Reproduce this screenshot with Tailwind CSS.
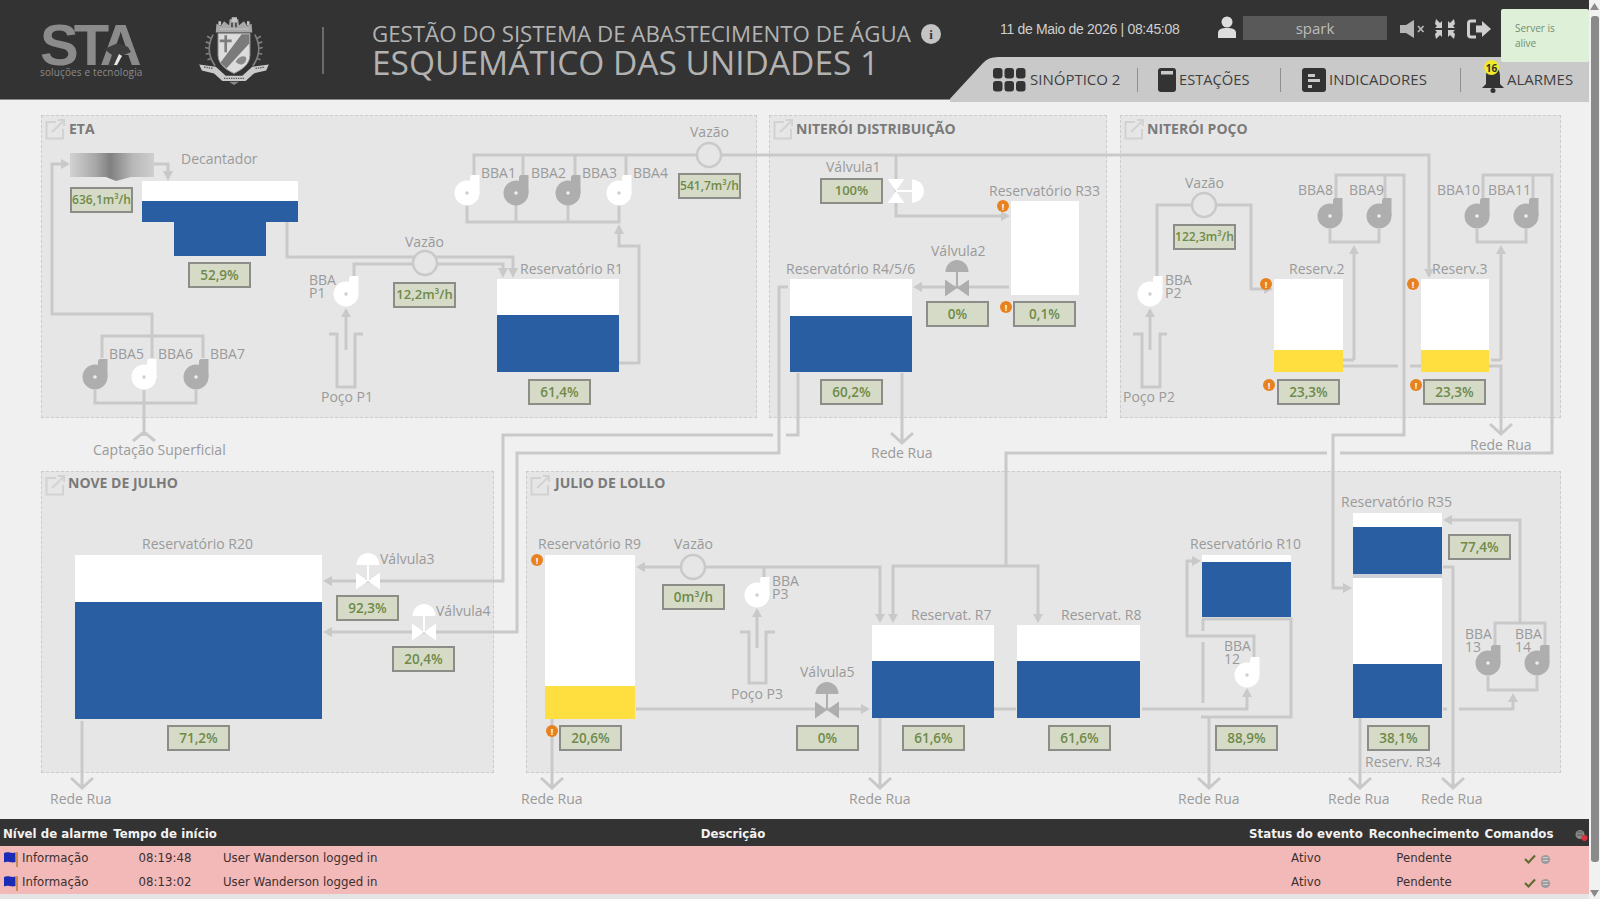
<!DOCTYPE html>
<html lang="pt-BR">
<head>
<meta charset="utf-8">
<title>Esquemático das Unidades 1</title>
<script src="https://cdn.jsdelivr.net/npm/@tailwindcss/browser@4"></script>
</head>
<body class="overflow-hidden bg-[#f0f0f0]">
<div class="flex h-[899px] w-[1600px] [font-family:'Open_Sans',sans-serif]">
  <div class="flex h-[899px] w-[1589px] flex-col">
    <!-- HEADER -->
    <header class="relative z-10 flex h-[100px] shrink-0 border-b border-[#8a8a8a] bg-[#333333]">
      <div class="ml-[40px] mt-[23px] w-[103px]">
        <div class="relative h-[44px] whitespace-nowrap text-[58px] font-bold leading-[44px] tracking-[-5px] text-[#8b8b8b] [font-family:'Liberation_Sans',sans-serif]">STA
          <svg class="absolute left-[64px] top-[19px]" width="28" height="24" viewBox="0 0 28 24"><path d="M0 7 L14 1 L24 5 L27 10 L18 14 L14 24 L4 24 L8 13Z" fill="#3d3d3d"/><path d="M10 23 L15 12 L18 14 L13 23Z" fill="#e8e8e8"/></svg>
        </div>
        <div class="whitespace-nowrap text-[10px] leading-[11px] tracking-[.14px] text-[#8b8b8b]">soluções e tecnologia</div>
      </div>
      <svg class="ml-[56px] mt-[17px]" width="70" height="68" viewBox="510 35 210 205">
        <path d="M560 82 L562 55 L575 62 L585 48 L600 60 L602 42 L628 42 L630 60 L645 48 L655 62 L668 55 L670 82Z" fill="#a8a8a8"/>
        <path d="M568 60h8v-12h-8zM608 50h16v-14h-16zM654 60h8v-12h-8zM572 70h88v3h-88z" fill="#c2c2c2"/>
        <path d="M606 52h6v14h-6zM618 52h6v14h-6z" fill="#555555"/>
        <path d="M567 85 H663 V150 C663 180 635 195 615 205 C595 195 567 180 567 150Z" fill="#dcdcdc" stroke="#9a9a9a" stroke-width="3"/>
        <path d="M638 87 H661 V115 L592 190 L574 173Z" fill="#7a7a7a"/>
        <path d="M586 90h8v13h14v8h-14v30h-8v-30h-14v-8h14z" fill="#7c7c7c"/>
        <path d="M620 170 C630 150 652 150 652 160 C652 175 635 187 620 170Z" fill="#8a8a8a"/>
        <path d="M552 88 C535 120 535 150 558 182 M546 100 l-12 -7 M543 115 l-13 -5 M541 130 l-13 -3 M542 145 l-12 1 M546 160 l-11 4 M678 88 C695 120 695 150 672 182 M684 100 l12 -7 M687 115 l13 -5 M689 130 l13 -3 M688 145 l12 1 M684 160 l11 4" stroke="#808080" stroke-width="5" fill="none"/>
        <path d="M510 178 L560 185 L590 212 L640 212 L670 185 L720 178 L712 196 L675 205 L650 228 L580 228 L555 205 L518 196Z" fill="#c9c9c9"/>
        <path d="M525 186l28 4M680 190l28-4M585 220h60" stroke="#555555" stroke-width="4" stroke-dasharray="4 3" fill="none"/>
        <path d="M600 230 L630 230 L615 240Z" fill="#888888"/>
      </svg>
      <div class="ml-[53px] mt-[27px] h-[47px] w-[2px] bg-[#6b6b6b]"></div>
      <div class="ml-[48px] w-[549px] pt-[21px] text-[#b2b2b2]">
        <div class="flex items-center">
          <span class="whitespace-nowrap text-[22.300px] leading-[26px]">GESTÃO DO SISTEMA DE ABASTECIMENTO DE ÁGUA</span>
        </div>
        <div class="mt-[-4px] whitespace-nowrap text-[33.500px] leading-[38px]">ESQUEMÁTICO DAS UNIDADES 1</div>
      </div>
      <div class="mt-[24px] flex h-[20px] w-[20px] shrink-0 items-center justify-center rounded-full bg-[#c4c4c4] text-[13px] font-bold leading-none text-[#333333] [font-family:'Liberation_Serif',serif]">i</div>
      <div class="absolute left-[950px] top-0 w-[639px]">
        <div class="flex h-[57px] items-center pl-[50px]">
          <div class="mt-[2px] w-[218px] whitespace-nowrap text-[14px] text-[#cfcfcf] [font-family:'Liberation_Sans',sans-serif] tracking-[-.32px]">11 de Maio de 2026 | 08:45:08</div>
          <svg class="mb-[3px] -ml-[1px]" width="20" height="22" viewBox="0 0 20 22"><circle cx="10" cy="6" r="5.500" fill="#dddddd"/><path d="M1 22 V17 C1 13 5 12 10 12 C15 12 19 13 19 17 V22Z" fill="#dddddd"/></svg>
          <div class="ml-[6px] mb-[1px] flex h-[24px] w-[144px] items-center justify-center bg-[#595959] text-[15px] text-[#bdbdbd]">spark</div>
          <svg class="ml-[13px]" width="25" height="18" viewBox="0 0 25 18"><path d="M0 5h6l8-5v18l-8-5H0z" fill="#b5b5b5"/><path d="M18 6l5.500 6M23.500 6l-5.500 6" stroke="#b5b5b5" stroke-width="1.800"/></svg>
          <svg class="ml-[10px]" width="20" height="20" viewBox="0 0 20 20"><path d="M1 0l4 4 2-2v7H0l2-2-2-2z M19 0l-4 4-2-2v7h7l-2-2 2-2z M1 20l4-4 2 2v-7H0l2 2-2 2z M19 20l-4-4-2 2v-7h7l-2 2 2 2z" fill="#cdcdcd"/></svg>
          <svg class="ml-[12px]" width="25" height="20" viewBox="0 0 25 20"><path d="M9 2H4C2.500 2 1.500 3 1.500 4.500v11C1.500 17 2.500 18 4 18h5" fill="none" stroke="#cfcfcf" stroke-width="3"/><path d="M9 6.500h6V2l9 8-9 8v-4.500H9z" fill="#cfcfcf"/></svg>
        </div>
        <div class="relative h-[45px]">
          <svg class="absolute left-0 top-0" width="639" height="45" viewBox="0 0 639 45"><path d="M-3 45 L33 6 Q38 0 48 0 H639 V45Z" fill="#c9c9c9"/></svg>
          <nav class="relative flex h-[45px] items-center text-[15px] text-[#3f3f3f]">
            <div class="flex w-[187px] items-center pl-[43px]">
              <svg width="33" height="24" viewBox="0 0 33 24"><g fill="#333333"><rect width="9.500" height="10.500" rx="3"/><rect x="11.500" width="9.500" height="10.500" rx="3"/><rect x="23" width="9.500" height="10.500" rx="3"/><rect y="13" width="9.500" height="10.500" rx="3"/><rect x="11.500" y="13" width="9.500" height="10.500" rx="3"/><rect x="23" y="13" width="9.500" height="10.500" rx="3"/></g></svg>
              <span class="ml-[4px] whitespace-nowrap">SINÓPTICO 2</span>
            </div>
            <div class="h-[24px] w-[1px] bg-[#8f8f8f]"></div>
            <div class="flex w-[142px] items-center pl-[20px]">
              <svg width="18" height="24" viewBox="0 0 18 24"><rect width="18" height="24" rx="3" fill="#333333"/><rect x="3" y="3" width="12" height="3.500" fill="#c9c9c9"/></svg>
              <span class="ml-[3px] text-[14.700px]">ESTAÇÕES</span>
            </div>
            <div class="h-[24px] w-[1px] bg-[#8f8f8f]"></div>
            <div class="flex w-[179px] items-center pl-[21px]">
              <svg width="24" height="24" viewBox="0 0 24 24"><rect width="24" height="24" rx="3" fill="#333333"/><path d="M6 6h7v3H6zM6 11h12v3H6zM6 17h4v3H6z" fill="#c9c9c9"/></svg>
              <span class="ml-[3px]">INDICADORES</span>
            </div>
            <div class="h-[24px] w-[1px] bg-[#8f8f8f]"></div>
            <div class="relative flex items-center pl-[21px]">
              <svg width="22" height="27" viewBox="0 0 22 27"><path d="M11 1C6 1 4 5 4 10V18L0 22H22L18 18V10C18 5 16 1 11 1Z" fill="#333333"/><circle cx="11" cy="24.500" r="2.500" fill="#333333"/></svg>
              <span class="ml-[3px]">ALARMES</span>
              <div class="absolute left-[23px] top-[-6px] flex h-[15px] w-[15px] items-center justify-center rounded-full bg-[#f2ea2a] text-[10px] font-bold leading-none text-[#333333]">16</div>
            </div>
          </nav>
        </div>
      </div>
      <div class="absolute left-[1501px] top-[9px] h-[53px] w-[88px] rounded-[2px] bg-[#dff0d8] px-[14px] pt-[12px] text-[10px] leading-[15px] text-[#6f8f72]">Server is alive</div>
    </header>

    <!-- DIAGRAM -->
    <main class="relative h-[719px] shrink-0 overflow-hidden bg-[#f0f0f0]">
      <div class="absolute left-0 top-[-100px] h-[899px] w-[1589px]">
        <!-- panels -->
        <section class="absolute left-[41px] top-[115px] flex h-[303px] w-[716px] items-start gap-[4px] border border-dashed border-[#cccccc] bg-[#e6e6e6] pl-[3px] pt-[3px]">
          <svg width="20" height="21" viewBox="0 0 20 21" fill="none" stroke="#d2d2d2" stroke-width="2"><path d="M11 3H1.500V19.500H18V10M7 13L19 1.500M13 1H19V7"/></svg>
          <h2 class="text-[14px] font-bold leading-[19px] text-[#7a7a7a]">ETA</h2>
        </section>
        <section class="absolute left-[769px] top-[115px] flex h-[303px] w-[338px] items-start gap-[3px] border border-dashed border-[#cccccc] bg-[#e6e6e6] pl-[3px] pt-[3px]">
          <svg width="20" height="21" viewBox="0 0 20 21" fill="none" stroke="#d2d2d2" stroke-width="2"><path d="M11 3H1.500V19.500H18V10M7 13L19 1.500M13 1H19V7"/></svg>
          <h2 class="text-[14px] font-bold leading-[19px] text-[#7a7a7a]">NITERÓI DISTRIBUIÇÃO</h2>
        </section>
        <section class="absolute left-[1120px] top-[115px] flex h-[303px] w-[441px] items-start gap-[3px] border border-dashed border-[#cccccc] bg-[#e6e6e6] pl-[3px] pt-[3px]">
          <svg width="20" height="21" viewBox="0 0 20 21" fill="none" stroke="#d2d2d2" stroke-width="2"><path d="M11 3H1.500V19.500H18V10M7 13L19 1.500M13 1H19V7"/></svg>
          <h2 class="text-[14px] font-bold leading-[19px] text-[#7a7a7a]">NITERÓI POÇO</h2>
        </section>
        <section class="absolute left-[41px] top-[471px] flex h-[302px] w-[453px] items-start gap-[3px] border border-dashed border-[#cccccc] bg-[#e6e6e6] pl-[3px] pt-[3px]">
          <svg width="20" height="21" viewBox="0 0 20 21" fill="none" stroke="#d2d2d2" stroke-width="2"><path d="M11 3H1.500V19.500H18V10M7 13L19 1.500M13 1H19V7"/></svg>
          <h2 class="mt-[-2px] text-[14px] font-bold leading-[19px] text-[#7a7a7a]">NOVE DE JULHO</h2>
        </section>
        <section class="absolute left-[526px] top-[471px] flex h-[302px] w-[1035px] items-start gap-[5px] border border-dashed border-[#cccccc] bg-[#e6e6e6] pl-[3px] pt-[3px]">
          <svg width="20" height="21" viewBox="0 0 20 21" fill="none" stroke="#d2d2d2" stroke-width="2"><path d="M11 3H1.500V19.500H18V10M7 13L19 1.500M13 1H19V7"/></svg>
          <h2 class="mt-[-2px] text-[14px] font-bold leading-[19px] text-[#7a7a7a]">JULIO DE LOLLO</h2>
        </section>

        <!-- pipes, pumps, valves -->
        <svg class="absolute left-0 top-0" width="1589" height="899" viewBox="0 0 1589 899">
          <defs>
            <linearGradient id="dec" x1="0" x2="1" y1="0" y2="0">
              <stop offset="0" stop-color="#d2d2d2"/><stop offset=".3" stop-color="#a8a8a8"/><stop offset=".48" stop-color="#808080"/><stop offset=".75" stop-color="#b8b8b8"/><stop offset="1" stop-color="#cfcfcf"/>
            </linearGradient>
            <g id="pw"><circle r="12.500" fill="#ffffff"/><path d="M3 -16.500 L4.500 -18 H12.500 V0 H3Z" fill="#ffffff"/><circle r="1.800" fill="#cfcfcf"/></g>
            <g id="pg"><circle r="12.500" fill="#aeaeae"/><path d="M3 -16.500 L4.500 -18 H12.500 V0 H3Z" fill="#aeaeae"/><circle r="1.800" fill="#eeeeee"/></g>
            <g id="vw" fill="#ffffff"><path d="M-12 -8.500 L0 0 L-12 8.500Z M12 -8.500 L0 0 L12 8.500Z M-11.500 -16 A11.500 12 0 0 1 11.500 -16Z"/><rect x="-1" y="-16" width="2" height="16"/></g>
            <g id="vg" fill="#aeaeae"><path d="M-12 -8.500 L0 0 L-12 8.500Z M12 -8.500 L0 0 L12 8.500Z M-11.500 -16 A11.500 12 0 0 1 11.500 -16Z"/><rect x="-1" y="-16" width="2" height="16"/></g>
          </defs>
          <g fill="none" stroke="#c9c9c9" stroke-width="3">
            <path d="M152 358V314H52V164H62M154 164H168V172M102 358V336H203V358M95 390V403H196V390M144 390V436M133 441L144 432L155 441"/>
            <path d="M287 222V257H513V269M437 264H503V269M413 264H354V276M329 334H337V387H355V334H363M346 350V316M619 363H639V246H619V232"/>
            <path d="M474 175V155H697M523 155V175M575 155V175M626 155V175M721 155H1429V270M467 205V222H619V205M516 205V222M568 205V222"/>
            <path d="M896 155V216H1003M1009 287H921M902 373V441M891 433L902 443L913 433M788 287H779V453H517V632H332M798 373V435H786M773 435H503V581H332"/>
            <path d="M1192 205H1157V277M1216 205H1251V289H1265M1133 334H1142V387H1160V334H1167M1150 350V316"/>
            <path d="M1336 198V175H1404V435H1333V588H1344M1385 175V198M1330 229V242H1379V229M1354 360V254M1343 360H1354M1483 198V175H1552V453H1340M1327 453H1006V566M1038 615V566H893V615M1533 175V198M1477 229V242H1526V229M1501 360V254M1491 360H1501M1343 366H1398M1410 366H1421M1489 366H1501V432M1490 424L1501 434L1512 424"/>
            <path d="M82 721V786M71 778L82 788L93 778M552 719V786M541 778L552 788L563 778"/>
            <path d="M681 567H645M705 567H880V615M764 567V580M740 632H749V683H766V632H775M757 648V617M636 709H862M880 718V786M869 778L880 788L891 778M994 709H1016"/>
            <path d="M1142 709H1247V697M1254 657V636H1187V561H1193M1202 619H1291V717H1201M1203 619V631M1203 642V703M1209 717V786M1198 778L1209 788L1220 778"/>
            <path d="M1495 645V623H1545V645M1520 623V520H1452M1488 676V690H1537V676M1459 709H1513V702M1443 709H1447M1443 567H1453V786M1442 778L1453 788L1464 778M1360 718V786M1349 778L1360 788L1371 778"/>
          </g>
          <g fill="#c9c9c9">
            <polygon points="61,159 61,169 70,164"/><polygon points="163,171 173,171 168,181"/>
            <polygon points="508,268 518,268 513,278"/><polygon points="498,268 508,268 503,278"/>
            <polygon points="341,317 351,317 346,308"/><polygon points="614,234 624,234 619,224"/>
            <polygon points="1424,269 1434,269 1429,278"/><polygon points="1001,211 1001,221 1010,216"/>
            <polygon points="922,282 922,292 913,287"/><polygon points="332,627 332,637 323,632"/>
            <polygon points="332,576 332,586 323,581"/><polygon points="1264,284 1264,294 1273,289"/>
            <polygon points="1145,317 1155,317 1150,308"/><polygon points="1343,583 1343,593 1352,588"/>
            <polygon points="1349,254 1359,254 1354,245"/><polygon points="1496,254 1506,254 1501,245"/>
            <polygon points="1033,614 1043,614 1038,623"/><polygon points="888,614 898,614 893,623"/>
            <polygon points="875,614 885,614 880,623"/><polygon points="645,562 645,572 636,567"/>
            <polygon points="752,617 762,617 757,608"/><polygon points="861,704 861,714 870,709"/>
            <polygon points="1242,697 1252,697 1247,688"/><polygon points="1192,556 1192,566 1201,561"/>
            <polygon points="1452,515 1452,525 1443,520"/><polygon points="1508,702 1518,702 1513,693"/>
          </g>
          <g fill="#e6e6e6" stroke="#c9c9c9" stroke-width="2.500">
            <circle cx="425" cy="263" r="12"/><circle cx="709" cy="155" r="12"/><circle cx="1204" cy="205" r="12"/><circle cx="693" cy="567" r="12"/>
          </g>
          <path d="M70 153H154V177H131L116 181L106 177H70Z" fill="url(#dec)"/>
          <use href="#pg" x="95" y="377"/><use href="#pw" x="144" y="377"/><use href="#pg" x="196" y="377"/>
          <use href="#pw" x="346" y="294"/>
          <use href="#pw" x="467" y="193"/><use href="#pg" x="516" y="193"/><use href="#pg" x="568" y="193"/><use href="#pw" x="619" y="193"/>
          <use href="#pw" x="1150" y="294"/>
          <use href="#pg" x="1330" y="216"/><use href="#pg" x="1379" y="216"/><use href="#pg" x="1477" y="216"/><use href="#pg" x="1526" y="216"/>
          <use href="#pw" x="757" y="595"/><use href="#pw" x="1247" y="675"/>
          <use href="#pg" x="1488" y="663"/><use href="#pg" x="1537" y="663"/>
          <use href="#vw" transform="translate(896 191) rotate(90)"/>
          <use href="#vg" x="957" y="288"/><use href="#vg" x="827" y="710"/>
          <use href="#vw" x="368" y="581"/><use href="#vw" x="424" y="632"/>
        </svg>

        <!-- tanks -->
        <div class="absolute left-[142px] top-[181px] flex h-[41px] w-[156px] flex-col justify-end bg-white"><div class="h-[21px] bg-[#295ea2]"></div></div>
        <div class="absolute left-[174px] top-[222px] h-[34px] w-[92px] bg-[#295ea2]"></div>
        <div class="absolute left-[497px] top-[279px] flex h-[93px] w-[122px] flex-col justify-end bg-white"><div class="h-[57px] bg-[#295ea2]"></div></div>
        <div class="absolute left-[790px] top-[279px] flex h-[93px] w-[122px] flex-col justify-end bg-white"><div class="h-[56px] bg-[#295ea2]"></div></div>
        <div class="absolute left-[1011px] top-[201px] h-[94px] w-[68px] bg-white"></div>
        <div class="absolute left-[1274px] top-[279px] flex h-[93px] w-[69px] flex-col justify-end bg-white"><div class="h-[22px] bg-[#ffdf3f]"></div></div>
        <div class="absolute left-[1421px] top-[279px] flex h-[93px] w-[68px] flex-col justify-end bg-white"><div class="h-[22px] bg-[#ffdf3f]"></div></div>
        <div class="absolute left-[75px] top-[555px] flex h-[164px] w-[247px] flex-col justify-end bg-white"><div class="h-[117px] bg-[#295ea2]"></div></div>
        <div class="absolute left-[545px] top-[555px] flex h-[164px] w-[90px] flex-col justify-end bg-white"><div class="h-[33px] bg-[#ffdf3f]"></div></div>
        <div class="absolute left-[872px] top-[625px] flex h-[93px] w-[122px] flex-col justify-end bg-white"><div class="h-[57px] bg-[#295ea2]"></div></div>
        <div class="absolute left-[1017px] top-[625px] flex h-[93px] w-[123px] flex-col justify-end bg-white"><div class="h-[57px] bg-[#295ea2]"></div></div>
        <div class="absolute left-[1202px] top-[555px] flex h-[62px] w-[89px] flex-col justify-end bg-white"><div class="h-[55px] bg-[#295ea2]"></div></div>
        <div class="absolute left-[1353px] top-[513px] flex h-[61px] w-[89px] flex-col justify-end bg-white"><div class="h-[47px] bg-[#295ea2]"></div></div>
        <div class="absolute left-[1353px] top-[574px] h-[4px] w-[89px] bg-[#ced2d8]"></div>
        <div class="absolute left-[1353px] top-[578px] flex h-[140px] w-[89px] flex-col justify-end bg-white"><div class="h-[54px] bg-[#295ea2]"></div></div>

        <!-- values -->
        <div class="absolute left-[70px] top-[187px] flex h-[26px] w-[63px] items-center justify-center border-2 border-[#8c8c88] bg-[#d6dbc8] text-[12px] font-semibold text-[#6f8a48]">636,1m³/h</div>
        <div class="absolute left-[188px] top-[262px] flex h-[26px] w-[63px] items-center justify-center border-2 border-[#8c8c88] bg-[#d6dbc8] text-[13.500px] font-semibold text-[#6f8a48]">52,9%</div>
        <div class="absolute left-[393px] top-[282px] flex h-[26px] w-[63px] items-center justify-center border-2 border-[#8c8c88] bg-[#d6dbc8] text-[13px] font-semibold text-[#6f8a48]">12,2m³/h</div>
        <div class="absolute left-[528px] top-[379px] flex h-[26px] w-[63px] items-center justify-center border-2 border-[#8c8c88] bg-[#d6dbc8] text-[13.500px] font-semibold text-[#6f8a48]">61,4%</div>
        <div class="absolute left-[678px] top-[173px] flex h-[26px] w-[63px] items-center justify-center border-2 border-[#8c8c88] bg-[#d6dbc8] text-[12px] font-semibold text-[#6f8a48]">541,7m³/h</div>
        <div class="absolute left-[820px] top-[178px] flex h-[26px] w-[63px] items-center justify-center border-2 border-[#8c8c88] bg-[#d6dbc8] text-[13px] font-semibold text-[#6f8a48]">100%</div>
        <div class="absolute left-[926px] top-[301px] flex h-[26px] w-[63px] items-center justify-center border-2 border-[#8c8c88] bg-[#d6dbc8] text-[13.500px] font-semibold text-[#6f8a48]">0%</div>
        <div class="absolute left-[1013px] top-[301px] flex h-[26px] w-[63px] items-center justify-center border-2 border-[#8c8c88] bg-[#d6dbc8] text-[13.500px] font-semibold text-[#6f8a48]">0,1%</div>
        <div class="absolute left-[820px] top-[379px] flex h-[26px] w-[63px] items-center justify-center border-2 border-[#8c8c88] bg-[#d6dbc8] text-[13.500px] font-semibold text-[#6f8a48]">60,2%</div>
        <div class="absolute left-[1173px] top-[224px] flex h-[26px] w-[63px] items-center justify-center border-2 border-[#8c8c88] bg-[#d6dbc8] text-[12px] font-semibold text-[#6f8a48]">122,3m³/h</div>
        <div class="absolute left-[1277px] top-[379px] flex h-[26px] w-[63px] items-center justify-center border-2 border-[#8c8c88] bg-[#d6dbc8] text-[13.500px] font-semibold text-[#6f8a48]">23,3%</div>
        <div class="absolute left-[1423px] top-[379px] flex h-[26px] w-[63px] items-center justify-center border-2 border-[#8c8c88] bg-[#d6dbc8] text-[13.500px] font-semibold text-[#6f8a48]">23,3%</div>
        <div class="absolute left-[336px] top-[595px] flex h-[26px] w-[63px] items-center justify-center border-2 border-[#8c8c88] bg-[#d6dbc8] text-[13.500px] font-semibold text-[#6f8a48]">92,3%</div>
        <div class="absolute left-[392px] top-[646px] flex h-[26px] w-[63px] items-center justify-center border-2 border-[#8c8c88] bg-[#d6dbc8] text-[13.500px] font-semibold text-[#6f8a48]">20,4%</div>
        <div class="absolute left-[167px] top-[725px] flex h-[26px] w-[63px] items-center justify-center border-2 border-[#8c8c88] bg-[#d6dbc8] text-[13.500px] font-semibold text-[#6f8a48]">71,2%</div>
        <div class="absolute left-[559px] top-[725px] flex h-[26px] w-[63px] items-center justify-center border-2 border-[#8c8c88] bg-[#d6dbc8] text-[13.500px] font-semibold text-[#6f8a48]">20,6%</div>
        <div class="absolute left-[662px] top-[584px] flex h-[26px] w-[63px] items-center justify-center border-2 border-[#8c8c88] bg-[#d6dbc8] text-[13.500px] font-semibold text-[#6f8a48]">0m³/h</div>
        <div class="absolute left-[796px] top-[725px] flex h-[26px] w-[63px] items-center justify-center border-2 border-[#8c8c88] bg-[#d6dbc8] text-[13.500px] font-semibold text-[#6f8a48]">0%</div>
        <div class="absolute left-[902px] top-[725px] flex h-[26px] w-[63px] items-center justify-center border-2 border-[#8c8c88] bg-[#d6dbc8] text-[13.500px] font-semibold text-[#6f8a48]">61,6%</div>
        <div class="absolute left-[1048px] top-[725px] flex h-[26px] w-[63px] items-center justify-center border-2 border-[#8c8c88] bg-[#d6dbc8] text-[13.500px] font-semibold text-[#6f8a48]">61,6%</div>
        <div class="absolute left-[1215px] top-[725px] flex h-[26px] w-[63px] items-center justify-center border-2 border-[#8c8c88] bg-[#d6dbc8] text-[13.500px] font-semibold text-[#6f8a48]">88,9%</div>
        <div class="absolute left-[1448px] top-[534px] flex h-[26px] w-[63px] items-center justify-center border-2 border-[#8c8c88] bg-[#d6dbc8] text-[13.500px] font-semibold text-[#6f8a48]">77,4%</div>
        <div class="absolute left-[1367px] top-[725px] flex h-[26px] w-[63px] items-center justify-center border-2 border-[#8c8c88] bg-[#d6dbc8] text-[13.500px] font-semibold text-[#6f8a48]">38,1%</div>

        <!-- alarm dots -->
        <div class="absolute left-[997px] top-[200px] flex h-[12px] w-[12px] items-center justify-center rounded-full bg-[#e8821e] text-[9px] font-bold leading-none text-white">!</div>
        <div class="absolute left-[1000px] top-[301px] flex h-[12px] w-[12px] items-center justify-center rounded-full bg-[#e8821e] text-[9px] font-bold leading-none text-white">!</div>
        <div class="absolute left-[1260px] top-[278px] flex h-[12px] w-[12px] items-center justify-center rounded-full bg-[#e8821e] text-[9px] font-bold leading-none text-white">!</div>
        <div class="absolute left-[1263px] top-[379px] flex h-[12px] w-[12px] items-center justify-center rounded-full bg-[#e8821e] text-[9px] font-bold leading-none text-white">!</div>
        <div class="absolute left-[1407px] top-[278px] flex h-[12px] w-[12px] items-center justify-center rounded-full bg-[#e8821e] text-[9px] font-bold leading-none text-white">!</div>
        <div class="absolute left-[1410px] top-[379px] flex h-[12px] w-[12px] items-center justify-center rounded-full bg-[#e8821e] text-[9px] font-bold leading-none text-white">!</div>
        <div class="absolute left-[531px] top-[554px] flex h-[12px] w-[12px] items-center justify-center rounded-full bg-[#e8821e] text-[9px] font-bold leading-none text-white">!</div>
        <div class="absolute left-[546px] top-[725px] flex h-[12px] w-[12px] items-center justify-center rounded-full bg-[#e8821e] text-[9px] font-bold leading-none text-white">!</div>

        <!-- labels -->
        <div class="text-[14px] leading-[20px] text-[#9a9a9a]">
          <span class="absolute left-[181px] top-[149px] whitespace-nowrap">Decantador</span>
          <span class="absolute left-[109px] top-[344px] whitespace-nowrap">BBA5</span>
          <span class="absolute left-[158px] top-[344px] whitespace-nowrap">BBA6</span>
          <span class="absolute left-[210px] top-[344px] whitespace-nowrap">BBA7</span>
          <span class="absolute left-[93px] top-[440px] whitespace-nowrap">Captação Superficial</span>
          <span class="absolute left-[309px] top-[273px] leading-[13px]">BBA<br>P1</span>
          <span class="absolute left-[405px] top-[232px] whitespace-nowrap">Vazão</span>
          <span class="absolute left-[321px] top-[387px] whitespace-nowrap">Poço P1</span>
          <span class="absolute left-[481px] top-[163px] whitespace-nowrap">BBA1</span>
          <span class="absolute left-[531px] top-[163px] whitespace-nowrap">BBA2</span>
          <span class="absolute left-[582px] top-[163px] whitespace-nowrap">BBA3</span>
          <span class="absolute left-[633px] top-[163px] whitespace-nowrap">BBA4</span>
          <span class="absolute left-[690px] top-[122px] whitespace-nowrap">Vazão</span>
          <span class="absolute left-[520px] top-[259px] whitespace-nowrap">Reservatório R1</span>
          <span class="absolute left-[826px] top-[157px] whitespace-nowrap">Válvula1</span>
          <span class="absolute left-[989px] top-[181px] whitespace-nowrap">Reservatório R33</span>
          <span class="absolute left-[931px] top-[241px] whitespace-nowrap">Válvula2</span>
          <span class="absolute left-[786px] top-[259px] whitespace-nowrap">Reservatório R4/5/6</span>
          <span class="absolute left-[871px] top-[443px] whitespace-nowrap">Rede Rua</span>
          <span class="absolute left-[1185px] top-[173px] whitespace-nowrap">Vazão</span>
          <span class="absolute left-[1165px] top-[273px] leading-[13px]">BBA<br>P2</span>
          <span class="absolute left-[1123px] top-[387px] whitespace-nowrap">Poço P2</span>
          <span class="absolute left-[1298px] top-[180px] whitespace-nowrap">BBA8</span>
          <span class="absolute left-[1349px] top-[180px] whitespace-nowrap">BBA9</span>
          <span class="absolute left-[1437px] top-[180px] whitespace-nowrap">BBA10</span>
          <span class="absolute left-[1488px] top-[180px] whitespace-nowrap">BBA11</span>
          <span class="absolute left-[1289px] top-[259px] whitespace-nowrap">Reserv.2</span>
          <span class="absolute left-[1432px] top-[259px] whitespace-nowrap">Reserv.3</span>
          <span class="absolute left-[1470px] top-[435px] whitespace-nowrap">Rede Rua</span>
          <span class="absolute left-[142px] top-[534px] whitespace-nowrap">Reservatório R20</span>
          <span class="absolute left-[380px] top-[549px] whitespace-nowrap">Válvula3</span>
          <span class="absolute left-[436px] top-[601px] whitespace-nowrap">Válvula4</span>
          <span class="absolute left-[50px] top-[789px] whitespace-nowrap">Rede Rua</span>
          <span class="absolute left-[538px] top-[534px] whitespace-nowrap">Reservatório R9</span>
          <span class="absolute left-[674px] top-[534px] whitespace-nowrap">Vazão</span>
          <span class="absolute left-[772px] top-[574px] leading-[13px]">BBA<br>P3</span>
          <span class="absolute left-[731px] top-[684px] whitespace-nowrap">Poço P3</span>
          <span class="absolute left-[800px] top-[662px] whitespace-nowrap">Válvula5</span>
          <span class="absolute left-[911px] top-[605px] whitespace-nowrap">Reservat. R7</span>
          <span class="absolute left-[521px] top-[789px] whitespace-nowrap">Rede Rua</span>
          <span class="absolute left-[849px] top-[789px] whitespace-nowrap">Rede Rua</span>
          <span class="absolute left-[1061px] top-[605px] whitespace-nowrap">Reservat. R8</span>
          <span class="absolute left-[1190px] top-[534px] whitespace-nowrap">Reservatório R10</span>
          <span class="absolute left-[1224px] top-[639px] leading-[13px]">BBA<br>12</span>
          <span class="absolute left-[1178px] top-[789px] whitespace-nowrap">Rede Rua</span>
          <span class="absolute left-[1341px] top-[492px] whitespace-nowrap">Reservatório R35</span>
          <span class="absolute left-[1365px] top-[752px] whitespace-nowrap">Reserv. R34</span>
          <span class="absolute left-[1465px] top-[627px] leading-[13px]">BBA<br>13</span>
          <span class="absolute left-[1515px] top-[627px] leading-[13px]">BBA<br>14</span>
          <span class="absolute left-[1328px] top-[789px] whitespace-nowrap">Rede Rua</span>
          <span class="absolute left-[1421px] top-[789px] whitespace-nowrap">Rede Rua</span>
        </div>
      </div>
    </main>

    <!-- ALARM TABLE -->
    <footer class="h-[80px] shrink-0 bg-[#e4e4e4] [font-family:'DejaVu_Sans',sans-serif]">
      <div class="flex h-[27px] items-center whitespace-nowrap bg-[#333333] pt-[5px] text-[11.800px] font-bold text-[#f2f2f2]">
        <div class="w-[110px] pl-[3px]">Nível de alarme</div>
        <div class="w-[110px] text-center">Tempo de início</div>
        <div class="w-[1026px] text-center">Descrição</div>
        <div class="w-[120px] text-center">Status do evento</div>
        <div class="w-[116px] text-center">Reconhecimento</div>
        <div class="w-[74px] text-center">Comandos</div>
        <div class="w-[33px] pl-[18px]">
          <svg width="14" height="14" viewBox="0 0 14 14"><circle cx="6" cy="6.500" r="4.500" fill="#8a8a8a"/><path d="M3 4h6M3 7h6" stroke="#555555"/><circle cx="10.500" cy="10" r="3" fill="#d8343f"/></svg>
        </div>
      </div>
      <div class="bg-[#f3b8b8] text-[11.750px] text-[#3c3030]">
        <div class="flex h-[24px] items-center whitespace-nowrap pt-[2px]">
          <div class="flex w-[110px] items-center pl-[3px]">
            <svg width="16" height="16" viewBox="0 0 16 16"><path d="M1 2C5 0 8 3 12.500 1.500V11C8 12.500 5 9.500 1 11.500Z" fill="#1b2bb5"/><path d="M12.500 1h2.500v15h-2z" fill="#c98e4e"/></svg>
            <span class="ml-[3px]">Informação</span>
          </div>
          <div class="w-[110px] text-center">08:19:48</div>
          <div class="w-[1026px] pl-[3px]">User Wanderson logged in</div>
          <div class="w-[120px] text-center">Ativo</div>
          <div class="w-[116px] text-center">Pendente</div>
          <div class="flex w-[74px] items-center justify-end gap-[4px] pr-[5px]">
            <svg width="12" height="10" viewBox="0 0 12 10"><path d="M1 5L4.500 8.500L11 1.500" fill="none" stroke="#5a6b2a" stroke-width="2"/></svg>
            <svg width="11" height="11" viewBox="0 0 12 12"><circle cx="6" cy="6" r="5" fill="#9b9b9b"/><path d="M3 4h6M3 7h6" stroke="#d8d8d8"/></svg>
          </div>
        </div>
        <div class="flex h-[24px] items-center whitespace-nowrap pt-[2px]">
          <div class="flex w-[110px] items-center pl-[3px]">
            <svg width="16" height="16" viewBox="0 0 16 16"><path d="M1 2C5 0 8 3 12.500 1.500V11C8 12.500 5 9.500 1 11.500Z" fill="#1b2bb5"/><path d="M12.500 1h2.500v15h-2z" fill="#c98e4e"/></svg>
            <span class="ml-[3px]">Informação</span>
          </div>
          <div class="w-[110px] text-center">08:13:02</div>
          <div class="w-[1026px] pl-[3px]">User Wanderson logged in</div>
          <div class="w-[120px] text-center">Ativo</div>
          <div class="w-[116px] text-center">Pendente</div>
          <div class="flex w-[74px] items-center justify-end gap-[4px] pr-[5px]">
            <svg width="12" height="10" viewBox="0 0 12 10"><path d="M1 5L4.500 8.500L11 1.500" fill="none" stroke="#5a6b2a" stroke-width="2"/></svg>
            <svg width="11" height="11" viewBox="0 0 12 12"><circle cx="6" cy="6" r="5" fill="#9b9b9b"/><path d="M3 4h6M3 7h6" stroke="#d8d8d8"/></svg>
          </div>
        </div>
      </div>
    </footer>
  </div>

  <!-- scrollbar -->
  <div class="flex h-[899px] w-[11px] flex-col items-center bg-[#f1f1f1] pt-[3px]">
    <svg width="9" height="7" viewBox="0 0 9 7"><path d="M4.500 0L9 7H0Z" fill="#8a8a8a"/></svg>
    <div class="mt-[6px] h-[846px] w-[8px] rounded-[3px] bg-[#8a8a8a]"></div>
    <svg class="mt-[28px]" width="9" height="7" viewBox="0 0 9 7"><path d="M4.500 7L9 0H0Z" fill="#8a8a8a"/></svg>
  </div>
</div>
</body>
</html>
